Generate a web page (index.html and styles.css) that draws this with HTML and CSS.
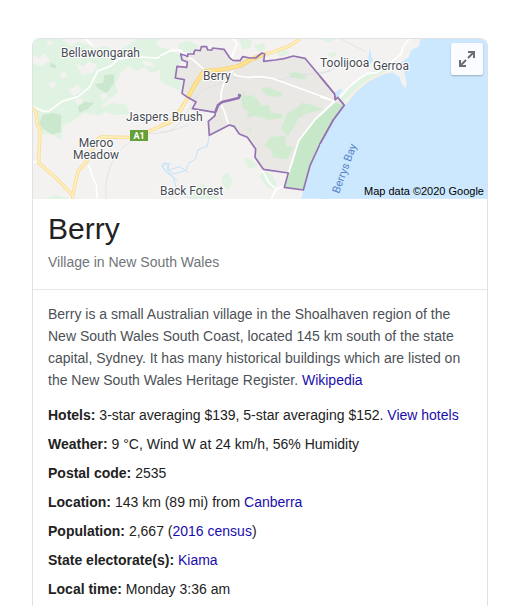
FILE: index.html
```html
<!DOCTYPE html>
<html lang="en">
<head>
<meta charset="utf-8">
<title>Berry</title>
<meta name="viewport" content="width=device-width, initial-scale=1">
<link rel="stylesheet" href="styles.css">
</head>
<body>
<main class="panel">
  <div class="map">
    <svg class="map-art" viewBox="33 39 454 160" preserveAspectRatio="xMidYMid slice" role="img" aria-label="Map of Berry">
      <rect class="land" x="33" y="39" width="454" height="160"/>

      <!-- western hills -->
      <g transform="translate(28 34) scale(.33333)">
        <path class="forest" d="M14 14H392L386 30L398 42L424 44L432 60L408 66L412 96L432 112L428 138L408 130L396 108L368 118L350 100L326 112L300 96L276 120L262 150L270 176L244 196L222 214L240 232L212 244L168 238L132 262L104 276L100 318L76 302L44 300L34 270L14 226Z"/>
        <path class="forest" d="M216 228L250 206L296 212L304 240L262 244ZM46 494L88 484L124 494Z"/>
        <path class="land" d="M98 14L130 36L150 24L176 30L196 44L236 36L266 52L310 28L330 14ZM14 62L30 72L52 58L66 80L40 96L14 88ZM142 90L170 96L182 82L206 92L196 116L162 122ZM120 168L150 152L162 170L138 186ZM140 198L160 192L164 208L146 212ZM216 184L236 176L240 190L222 198Z"/>
        <path class="land" d="M60 18L76 24L70 34L56 30ZM96 118L112 112L118 126L104 134ZM62 148L78 142L86 156L70 164ZM340 78L368 84L380 98L352 96Z"/>
        <path class="wood" d="M228 124L258 120L258 148L236 178L212 164L200 150L226 146ZM44 242L76 236L100 244L98 294L74 302L44 284L34 268ZM150 218L168 204L200 206L180 224L154 236ZM152 38L166 44L160 56L150 50ZM68 86L86 94L80 104L66 98Z"/>
        <path class="rail" d="M480 272C440 290 400 298 360 300C290 318 244 370 234 450V494"/>
        <path class="creek" d="M480 490L444 460L436 430L416 416L402 398L412 386L424 408L454 398L480 414"/>
        <path class="road" d="M14 216L44 232H62L102 202L150 188L186 158L208 112L248 96L270 76L316 68L390 72L414 58L446 48L480 60M172 14L194 34M182 392L194 430L206 456V494M14 382L34 386"/>
        <path class="highway-edge" d="M14 220L24 236L28 268L36 290L32 386L80 428L134 484V494M134 484L150 412L178 380L208 316L220 309L340 311L362 292L424 266L460 222L480 190"/>
        <path class="highway" d="M14 220L24 236L28 268L36 290L32 386L80 428L134 484V494M134 484L150 412L178 380L208 316L220 309L340 311L362 292L424 266L460 222L480 190"/>
      </g>

      <!-- village district -->
      <g transform="translate(160 34) scale(.33333)">
        <path class="forest" d="M0 66L30 50L60 62L64 84L50 96L46 132L66 142L62 170L30 158L0 140ZM54 30L86 20L118 36L98 54L62 56ZM238 14L278 18L270 40L248 48ZM280 34L310 26L318 44L296 54ZM248 372L276 376L292 398L268 404ZM90 460L130 452L168 474L176 494H86ZM184 430L204 416L218 440L206 468L190 456ZM296 426L314 412L336 422L350 446L342 468L322 460ZM350 54L378 46L390 60L360 68Z"/>
        <path class="sea" d="M510 282L470 348L446 410L424 494H510Z"/>
        <path class="district" d="M62 60L74 64L83 68V60H102V54L106 48L121 50L124 38H140L143 48H156L158 42L192 46L208 70L218 79L240 80L248 68L270 72H287L306 57L314 60L311 82L345 78L372 74L400 66L435 73L470 115L524 180L526 198L533 190L553 214L520 258L480 330L450 395L430 468L373 460L385 417L310 406L285 370L287 345L262 310L238 300L222 277L208 273L148 304L145 262L165 245L166 235L97 224L108 204L83 190L66 178L73 137L46 132L51 97L80 100L82 84L66 78Z"/>
        <path class="grove" d="M244 186L274 184L292 194L304 216L326 212L334 236L366 240L370 252L326 258L304 250L278 246L260 256L266 234L246 218ZM302 166L320 158L368 178L364 188L322 186ZM386 118L410 114L440 124L434 136L396 132ZM330 310L376 304L378 336L402 340L382 376L338 370L336 350L314 336ZM362 284L382 238L410 222L426 206L458 214L490 226L444 238L416 252L402 278L384 306L374 296ZM266 284L276 282L270 294ZM246 172L258 176L250 186Z"/>
        <path class="reserve" d="M524 206L553 214L520 258L480 330L450 395L430 468L373 460L400 386L418 318L462 258Z"/>
        <path class="creek" d="M148 304L142 336L114 348L106 376L88 386L76 410L40 420L22 406L28 388L8 390L10 402L26 416L52 442"/>
        <path class="rail" d="M0 294C30 300 42 282 62 262C90 230 100 184 136 164L176 150L218 132L260 128L312 136H366L394 128L510 112"/>
        <path class="road" d="M0 66L30 50L62 48L76 68L98 76L134 108M218 14L232 28L216 66V84M220 118L232 126L264 130L304 128L340 134L510 196M218 110L192 146L184 174L182 208L192 230L206 272M306 406L326 444L348 466L372 456L386 416L416 320L466 256L524 200M348 466L334 494"/>
        <path class="highway-edge wide" d="M84 190L106 150L132 112L188 106L238 96L270 78L308 62"/>
        <path class="highway wide" d="M84 190L106 150L132 112L188 106L238 96L270 78L308 62"/>
        <path class="highway-edge" d="M308 62L340 54L392 34L420 14M84 190L66 222L40 260L0 276"/>
        <path class="highway" d="M308 62L340 54L392 34L420 14M84 190L66 222L40 260L0 276"/>
        <path class="boundary" d="M62 60L74 64L83 68V60H102V54L106 48L121 50L124 38H140L143 48H156L158 42L192 46L208 70L218 79L240 80L248 68L270 72H287L306 57L314 60L311 82L345 78L372 74L400 66L435 73L470 115L524 180L526 198L533 190L553 214L520 258L480 330L450 395L430 468L373 460L385 417L310 406L285 370L287 345L262 310L238 300L222 277L208 273L148 304L145 262L165 245L166 235L97 224L108 204L83 190L66 178L73 137L46 132L51 97L80 100L82 84L66 78Z"/>
        <path class="boundary thick" d="M166 235L174 214L186 204L212 198L236 192L240 184L234 182"/>
      </g>

      <!-- coast -->
      <g transform="translate(320 34) scale(.33333)">
        <path class="sea" d="M302 14L296 38L274 48L266 70L240 88L254 120L260 146L258 162L246 152L238 128L216 114L184 122L144 142L106 174L73 214L40 258L0 330V494H510V14Z"/>
        <path class="forest" d="M60 184L84 158L120 130L158 110L210 108L172 122L130 146L92 180L70 206L56 190Z"/>
        <path class="forest" d="M0 14L28 26L46 14ZM22 60L44 54L52 64L34 70Z"/>
        <path class="sand" d="M73 212L106 173L144 141L186 120L218 112"/>
        <path class="rail" d="M0 122L40 104L80 78M60 14L140 54"/>
        <path class="water" d="M150 40L154 66L160 82L148 88L144 74ZM44 178L56 166L68 164L60 180L50 194Z"/>
        <path class="road" d="M44 202L62 188L86 160L120 132L144 118L170 116L196 100M214 84L242 62L250 38L268 14M0 188L44 202L0 244"/>
        <path class="boundary" d="M0 127L44 180L46 198L53 190L73 214L40 258L0 330"/>
      </g>

      <rect class="shield" x="130" y="130" width="18" height="11"/>
      <text class="shield-text" x="139" y="139" text-anchor="middle">A1</text>
      <g class="place">
        <text x="61" y="57">Bellawongarah</text>
        <text x="203" y="80">Berry</text>
        <text x="320" y="67">Toolijooa</text>
        <text x="373" y="70">Gerroa</text>
        <text x="126" y="121">Jaspers Brush</text>
        <text x="96" y="147" text-anchor="middle">Meroo</text>
        <text x="96" y="159" text-anchor="middle">Meadow</text>
        <text x="160" y="195">Back Forest</text>
      </g>
      <text class="bay" transform="translate(339 194) rotate(-70)">Berrys Bay</text>
      <text class="credit" x="484" y="195" text-anchor="end">Map data ©2020 Google</text>
    </svg>
    <button class="expand" type="button" aria-label="Expand map">
      <svg class="expand-icon" viewBox="0 0 18 18" aria-hidden="true">
        <path d="M10 2H16V8M16 2L10 8M2 10V16H8M2 16L8 10"/>
      </svg>
    </button>
  </div>

  <header class="heading">
    <h1>Berry</h1>
    <p>Village in New South Wales</p>
  </header>

  <section class="details">
    <p class="summary">Berry is a small Australian village in the Shoalhaven region of the New South Wales South Coast, located 145 km south of the state capital, Sydney. It has many historical buildings which are listed on the New South Wales Heritage Register. <a href="#wikipedia">Wikipedia</a></p>
    <div class="facts">
      <p><b>Hotels:</b> 3-star averaging $139, 5-star averaging $152. <a href="#hotels">View hotels</a></p>
      <p><b>Weather:</b> 9 °C, Wind W at 24 km/h, 56% Humidity</p>
      <p><b>Postal code:</b> 2535</p>
      <p><b>Location:</b> 143 km (89 mi) from <a href="#canberra">Canberra</a></p>
      <p><b>Population:</b> 2,667 (<a href="#census">2016 census</a>)</p>
      <p><b>State electorate(s):</b> <a href="#kiama">Kiama</a></p>
      <p><b>Local time:</b> Monday 3:36 am</p>
    </div>
  </section>
</main>
</body>
</html>
```
FILE: styles.css
```css
* {
  box-sizing: border-box;
}

body {
  margin: 0;
  padding: 38px 35px 0 32px;
  background: #fff;
  color: #222;
  font: 14px/22px "Liberation Sans", Arial, sans-serif;
}

h1,
p {
  margin: 0;
}

a {
  color: #1a0dab;
  text-decoration: none;
}

.panel {
  border: 1px solid #dfe1e5;
  border-bottom: 0;
  border-radius: 8px 8px 0 0;
  overflow: hidden;
}

.map {
  position: relative;
  height: 160px;
}

.map-art {
  display: block;
  width: 100%;
  height: 100%;
}

.map-art path {
  fill: none;
  stroke-linejoin: round;
}

.map-art .land { fill: #f3f2f0; }
.map-art .forest { fill: #e0f3e2; }
.map-art .wood { fill: #cbe8cf; }
.map-art .district { fill: #e9e8e4; }
.map-art .grove { fill: #d0ebd0; }
.map-art .reserve { fill: #c6e7c8; }
.map-art .sea,
.map-art .water { fill: #cce8ff; }

.map-art .road { stroke: #fff; stroke-width: 5; }
.map-art .rail { stroke: #dcdddf; stroke-width: 2; }
.map-art .creek { stroke: #c0e2fa; stroke-width: 3; }
.map-art .sand { stroke: #f5f0e2; stroke-width: 5; }
.map-art .highway-edge { stroke: #f8d98c; stroke-width: 10; }
.map-art .highway { stroke: #ffefbd; stroke-width: 6; }
.map-art .highway-edge.wide { stroke: #f4cf70; stroke-width: 13; }
.map-art .highway.wide { stroke: #ffe391; stroke-width: 9; }
.map-art .boundary { stroke: #9573b3; stroke-width: 5; }
.map-art .boundary.thick { stroke-width: 8; }

.place {
  fill: #474c54;
  stroke: #fff;
  stroke-width: 2px;
  stroke-linejoin: round;
  paint-order: stroke;
  font: 12px Roboto, sans-serif;
}

.shield { fill: #689f38; }

.shield-text {
  fill: #fff;
  font: bold 9px Roboto, sans-serif;
}

.bay {
  fill: #5485c8;
  font: 11px Roboto, sans-serif;
}

.credit {
  fill: #000;
  font: 11px "Liberation Sans", Arial, sans-serif;
}

.expand {
  position: absolute;
  top: 4px;
  right: 4px;
  display: grid;
  place-items: center;
  width: 32px;
  height: 32px;
  padding: 0;
  border: 0;
  border-radius: 2px;
  background: #fafcff;
  box-shadow: 0 1px 2px rgba(0, 0, 0, 0.25);
}

.expand-icon {
  width: 18px;
  height: 18px;
  fill: none;
  stroke: #6c6f72;
  stroke-width: 2;
}

.heading {
  padding: 12px 15px 16px;
  border-bottom: 1px solid #e5e7ea;
}

.heading h1 {
  font-size: 30px;
  font-weight: 400;
  line-height: 36px;
}

.heading p {
  padding-top: 4px;
  color: #70757a;
}

.details {
  padding: 13px 15px 0;
}

.summary {
  color: #4d5156;
}

.facts {
  display: grid;
  gap: 7px;
  padding: 13px 0 6px;
}
```
